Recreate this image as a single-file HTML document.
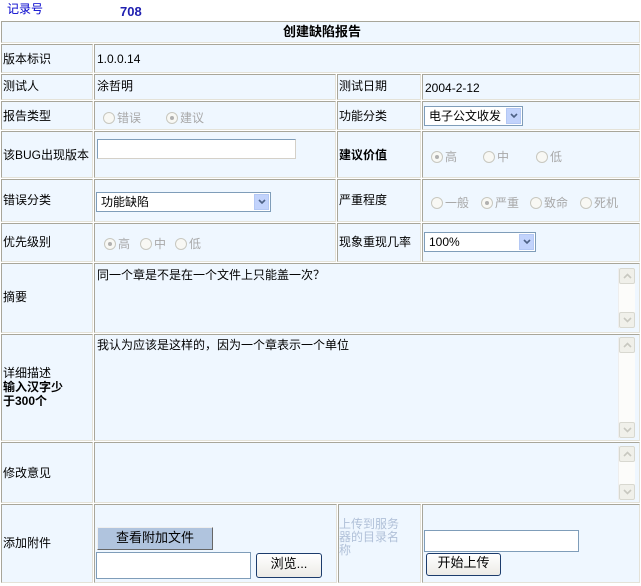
<!DOCTYPE html>
<html><head><meta charset="utf-8"><style>
body{margin:0;width:641px;height:586px;background:#fff;position:relative;overflow:hidden;font-family:"Liberation Sans","Noto Sans CJK SC","WenQuanYi Zen Hei",sans-serif;font-size:12px;color:#000}
.c{position:absolute;box-sizing:border-box;background:#eff7ff;border:1px solid;border-color:#a8a69a #e4e2d8 #e4e2d8 #a8a69a;}
.t{position:absolute;white-space:nowrap;line-height:14px}
.g{color:#a8a8a8}
.r{display:inline-block;width:12px;height:12px;border:1px solid #c8c8c0;border-radius:50%;box-sizing:border-box;vertical-align:-2px;margin-right:2px;background:#f8f8f4;position:relative}
.r.on::after{content:"";position:absolute;left:3px;top:3px;width:4px;height:4px;border-radius:50%;background:#b0b0b0}
.sel{position:absolute;box-sizing:border-box;border:1px solid #7f9db9;background:#fff;height:20px;line-height:18px;padding-left:4px}
.sel .a{position:absolute;right:1px;top:1px;width:15px;height:16px;background:#c2d3fc;border:1px solid #b4c8f4;box-sizing:border-box}
.sel .a svg{position:absolute;left:3px;top:4px}
.in{position:absolute;box-sizing:border-box;border:1px solid #7f9db9;background:#fff}
.sb{position:absolute;width:16px;background:#fcfcfa;border-left:1px solid #eee}
.sb .u,.sb .d{position:absolute;left:0;width:16px;height:16px;background:#f0f0ea;border:1px solid #d8d8d0;box-sizing:border-box;border-radius:2px}
.sb svg{position:absolute;left:3px;top:4px}
.btn{position:absolute;box-sizing:border-box;border:1px solid #1c3c6c;border-radius:3px;background:linear-gradient(#fff,#ecebe6);text-align:center;line-height:20px;font-size:13px}
</style></head><body>
<div class="t" style="left:7px;top:2px;color:#0000cc">记录号</div>
<div class="t" style="left:120px;top:5px;color:#2020b0;font-weight:bold;font-size:13px">708</div>

<div class="c" style="left:1px;top:21px;width:639px;height:22px"></div>
<div class="t" style="left:283px;top:25px;font-weight:bold;font-size:13px">创建缺陷报告</div>

<div class="c" style="left:1px;top:44px;width:92px;height:29px"></div>
<div class="c" style="left:94px;top:44px;width:546px;height:29px"></div>
<div class="t" style="left:3px;top:52px">版本标识</div>
<div class="t" style="left:97px;top:52px">1.0.0.14</div>

<div class="c" style="left:1px;top:74px;width:92px;height:26px"></div>
<div class="c" style="left:94px;top:74px;width:242px;height:26px"></div>
<div class="c" style="left:337px;top:74px;width:84px;height:26px"></div>
<div class="c" style="left:422px;top:74px;width:218px;height:26px"></div>
<div class="t" style="left:3px;top:79px">测试人</div>
<div class="t" style="left:97px;top:79px">涂哲明</div>
<div class="t" style="left:339px;top:79px">测试日期</div>
<div class="t" style="left:425px;top:81px">2004-2-12</div>

<div class="c" style="left:1px;top:101px;width:92px;height:29px"></div>
<div class="c" style="left:94px;top:101px;width:242px;height:29px"></div>
<div class="c" style="left:337px;top:101px;width:84px;height:29px"></div>
<div class="c" style="left:422px;top:101px;width:218px;height:29px"></div>
<div class="t" style="left:3px;top:109px">报告类型</div>
<div class="t g" style="left:103px;top:111px"><span class="r"></span>错误</div>
<div class="t g" style="left:166px;top:111px"><span class="r on"></span>建议</div>
<div class="t" style="left:339px;top:109px">功能分类</div>
<div class="sel" style="left:424px;top:106px;width:99px">电子公文收发<span class="a"><svg width="8" height="6"><path d="M1 1 L4 4 L7 1" stroke="#4d6185" stroke-width="1.6" fill="none"/></svg></span></div>

<div class="c" style="left:1px;top:131px;width:92px;height:47px"></div>
<div class="c" style="left:94px;top:131px;width:242px;height:47px"></div>
<div class="c" style="left:337px;top:131px;width:84px;height:47px"></div>
<div class="c" style="left:422px;top:131px;width:218px;height:47px"></div>
<div class="t" style="left:3px;top:148px">该BUG出现版本</div>
<div class="in" style="left:97px;top:139px;width:199px;height:20px;border-color:#7f9db9 #d4d0c8 #d4d0c8 #7f9db9"></div>
<div class="t" style="left:339px;top:148px;font-weight:bold">建议价值</div>
<div class="t g" style="left:431px;top:150px"><span class="r on"></span>高</div>
<div class="t g" style="left:483px;top:150px"><span class="r"></span>中</div>
<div class="t g" style="left:536px;top:150px"><span class="r"></span>低</div>

<div class="c" style="left:1px;top:179px;width:92px;height:43px"></div>
<div class="c" style="left:94px;top:179px;width:242px;height:43px"></div>
<div class="c" style="left:337px;top:179px;width:84px;height:43px"></div>
<div class="c" style="left:422px;top:179px;width:218px;height:43px"></div>
<div class="t" style="left:3px;top:193px">错误分类</div>
<div class="sel" style="left:96px;top:192px;width:175px">功能缺陷<span class="a"><svg width="8" height="6"><path d="M1 1 L4 4 L7 1" stroke="#4d6185" stroke-width="1.6" fill="none"/></svg></span></div>
<div class="t" style="left:339px;top:193px">严重程度</div>
<div class="t g" style="left:431px;top:196px"><span class="r"></span>一般</div>
<div class="t g" style="left:481px;top:196px"><span class="r on"></span>严重</div>
<div class="t g" style="left:530px;top:196px"><span class="r"></span>致命</div>
<div class="t g" style="left:580px;top:196px"><span class="r"></span>死机</div>

<div class="c" style="left:1px;top:223px;width:92px;height:39px"></div>
<div class="c" style="left:94px;top:223px;width:242px;height:39px"></div>
<div class="c" style="left:337px;top:223px;width:84px;height:39px"></div>
<div class="c" style="left:422px;top:223px;width:218px;height:39px"></div>
<div class="t" style="left:3px;top:235px">优先级别</div>
<div class="t g" style="left:104px;top:237px"><span class="r on"></span>高</div>
<div class="t g" style="left:140px;top:237px"><span class="r"></span>中</div>
<div class="t g" style="left:175px;top:237px"><span class="r"></span>低</div>
<div class="t" style="left:339px;top:235px">现象重现几率</div>
<div class="sel" style="left:424px;top:232px;width:112px">100%<span class="a"><svg width="8" height="6"><path d="M1 1 L4 4 L7 1" stroke="#4d6185" stroke-width="1.6" fill="none"/></svg></span></div>

<div class="c" style="left:1px;top:263px;width:92px;height:70px"></div>
<div class="c" style="left:94px;top:263px;width:546px;height:70px"></div>
<div class="t" style="left:3px;top:290px">摘要</div>
<div class="t" style="left:97px;top:268px">同一个章是不是在一个文件上只能盖一次？</div>
<div class="sb" style="left:618px;top:268px;height:60px"><div class="u" style="top:0"><svg width="9" height="6"><path d="M1 5 L4.5 1.5 L8 5" stroke="#c8c8c0" stroke-width="1.6" fill="none"/></svg></div><div class="d" style="bottom:0"><svg width="9" height="6"><path d="M1 1 L4.5 4.5 L8 1" stroke="#c8c8c0" stroke-width="1.6" fill="none"/></svg></div></div>

<div class="c" style="left:1px;top:334px;width:92px;height:107px"></div>
<div class="c" style="left:94px;top:334px;width:546px;height:107px"></div>
<div class="t" style="left:3px;top:366px">详细描述<br><b>输入汉字少<br>于300个</b></div>
<div class="t" style="left:97px;top:338px">我认为应该是这样的，因为一个章表示一个单位</div>
<div class="sb" style="left:618px;top:337px;height:101px"><div class="u" style="top:0"><svg width="9" height="6"><path d="M1 5 L4.5 1.5 L8 5" stroke="#c8c8c0" stroke-width="1.6" fill="none"/></svg></div><div class="d" style="bottom:0"><svg width="9" height="6"><path d="M1 1 L4.5 4.5 L8 1" stroke="#c8c8c0" stroke-width="1.6" fill="none"/></svg></div></div>

<div class="c" style="left:1px;top:442px;width:92px;height:61px"></div>
<div class="c" style="left:94px;top:442px;width:546px;height:61px"></div>
<div class="t" style="left:3px;top:466px">修改意见</div>
<div class="sb" style="left:618px;top:446px;height:54px"><div class="u" style="top:0"><svg width="9" height="6"><path d="M1 5 L4.5 1.5 L8 5" stroke="#c8c8c0" stroke-width="1.6" fill="none"/></svg></div><div class="d" style="bottom:0"><svg width="9" height="6"><path d="M1 1 L4.5 4.5 L8 1" stroke="#c8c8c0" stroke-width="1.6" fill="none"/></svg></div></div>

<div class="c" style="left:1px;top:504px;width:92px;height:79px"></div>
<div class="c" style="left:94px;top:504px;width:243px;height:79px"></div>
<div class="c" style="left:338px;top:504px;width:83px;height:79px"></div>
<div class="c" style="left:422px;top:504px;width:218px;height:79px"></div>
<div class="t" style="left:3px;top:536px">添加附件</div>
<div style="position:absolute;left:97px;top:527px;width:116px;height:23px;background:#b0c4de;border:1px solid;border-color:#eee #666 #666 #eee;box-sizing:border-box;text-align:center;line-height:20px;font-size:13px">查看附加文件</div>
<div class="in" style="left:96px;top:552px;width:155px;height:27px"></div>
<div class="btn" style="left:256px;top:553px;width:66px;height:25px">浏览...</div>
<div class="t" style="left:339px;top:518px;color:#b0c0d8;line-height:13px">上传到服务<br>器的目录名<br>称</div>
<div class="in" style="left:424px;top:530px;width:155px;height:22px"></div>
<div class="btn" style="left:426px;top:553px;width:75px;height:23px;line-height:18px">开始上传</div>
</body></html>
